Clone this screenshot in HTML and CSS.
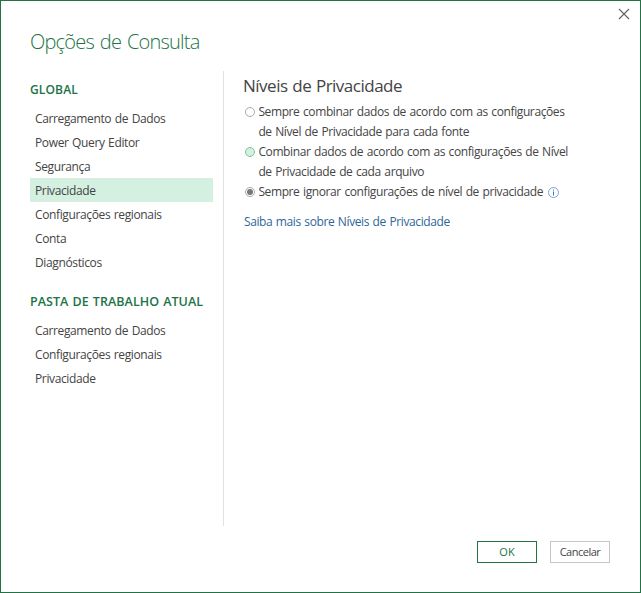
FILE: index.html
```html
<!DOCTYPE html>
<html lang="pt-BR">
<head>
<meta charset="utf-8">
<title>Opções de Consulta</title>
<link rel="stylesheet" href="styles.css">
</head>
<body>
<div class="dialog">
  <button class="close" aria-label="Fechar"><svg width="12" height="12" viewBox="0 0 12 12"><path d="M1 1L11 11M11 1L1 11"/></svg></button>
  <h1 class="title">Opções de Consulta</h1>
  <div class="body">
    <nav class="sidebar">
      <h2 class="group">GLOBAL</h2>
      <ul class="list">
        <li>Carregamento de Dados</li>
        <li>Power Query Editor</li>
        <li>Segurança</li>
        <li class="selected">Privacidade</li>
        <li>Configurações regionais</li>
        <li>Conta</li>
        <li>Diagnósticos</li>
      </ul>
      <h2 class="group workbook">PASTA DE TRABALHO ATUAL</h2>
      <ul class="list">
        <li>Carregamento de Dados</li>
        <li>Configurações regionais</li>
        <li>Privacidade</li>
      </ul>
    </nav>
    <main class="content">
      <h2 class="heading">Níveis de Privacidade</h2>
      <div class="option"><i class="radio"></i><span>Sempre combinar dados de acordo com as configurações<br>de Nível de Privacidade para cada fonte</span></div>
      <div class="option"><i class="radio hover"></i><span>Combinar dados de acordo com as configurações de Nível<br>de Privacidade de cada arquivo</span></div>
      <div class="option"><i class="radio checked"></i><span>Sempre ignorar configurações de nível de privacidade</span><svg class="info" width="11" height="11" viewBox="0 0 11 11"><circle cx="5.5" cy="5.5" r="5"/><path d="M5 2.5h1v1h-1zM5 4.5h1v4h-1z"/></svg></div>
      <a class="link">Saiba mais sobre Níveis de Privacidade</a>
    </main>
  </div>
  <footer class="footer">
    <button class="btn primary">OK</button>
    <button class="btn cancel">Cancelar</button>
  </footer>
</div>
</body>
</html>
```
FILE: styles.css
```css
* { box-sizing: border-box; }
body {
  margin: 0;
  font: 12px/20px "Open Sans", "Noto Sans", sans-serif;
  letter-spacing: -0.39px;
  word-spacing: 0.8px;
  color: #444;
  background: #fff;
}
.dialog {
  position: relative;
  display: flex;
  flex-direction: column;
  width: 641px;
  height: 593px;
  padding: 27px 30px 29px 29px;
  border: 1px solid #217346;
}
h1, h2, ul { margin: 0; padding: 0; }
.close {
  position: absolute;
  top: 7px;
  right: 10px;
  width: 12px;
  height: 12px;
  padding: 0;
  border: 0;
  background: none;
}
.close svg { display: block; }
.close path { stroke: #666; stroke-width: 1.2; fill: none; }
.title {
  height: 43px;
  font-size: 20px;
  line-height: 28px;
  font-weight: 300;
  letter-spacing: -0.8px;
  word-spacing: 1.5px;
  color: #217346;
  white-space: nowrap;
}
.body { display: flex; height: 455px; }
.sidebar {
  width: 194px;
  padding: 9px 10px 0 0;
  border-right: 1px solid #e1e1e1;
}
.group {
  font-size: 12px;
  line-height: 20px;
  font-weight: 600;
  letter-spacing: 0.15px;
  color: #217346;
  white-space: nowrap;
}
.workbook { margin-top: 18px; font-size: 12.5px; letter-spacing: 0.05px; }
.list { margin-top: 6px; list-style: none; }
.list li {
  height: 24px;
  padding-left: 5px;
  line-height: 26px;
  letter-spacing: -0.37px;
  white-space: nowrap;
}
.list .selected { background: #d3f0e0; }
.content { padding: 3px 0 0 19px; }
.heading {
  height: 28px;
  font-size: 17px;
  line-height: 24px;
  font-weight: 400;
  letter-spacing: -0.5px;
  white-space: nowrap;
}
.option { display: flex; padding-left: 2px; white-space: nowrap; }
.radio {
  position: relative;
  flex: none;
  width: 10px;
  height: 10px;
  margin: 5px 3.4px 0 0;
  border: 1px solid #ababab;
  border-radius: 50%;
  background: #fff;
}
.radio.hover { background: #d3f0e0; border-color: #86bfa0; }
.radio.checked::after {
  content: "";
  position: absolute;
  inset: 1px;
  border-radius: 50%;
  background: #777;
}
.info { flex: none; margin: 5px 0 0 5px; overflow: visible; }
.info circle { fill: #fff; stroke: #7da2d6; }
.info path { fill: #4472b8; }
.link { display: block; margin-top: 10px; padding-left: 1px; color: #2f6699; white-space: nowrap; }
.footer { display: flex; justify-content: flex-end; gap: 13px; margin-top: auto; }
.btn {
  width: 60px;
  height: 22px;
  padding: 0;
  border: 1px solid #c6c6c6;
  background: #fff;
  color: #444;
  font: 11px/20px "Open Sans", "Noto Sans", sans-serif;
}
.btn.primary { border-color: #217346; color: #217346; }
.btn.cancel { letter-spacing: -0.5px; }
```
